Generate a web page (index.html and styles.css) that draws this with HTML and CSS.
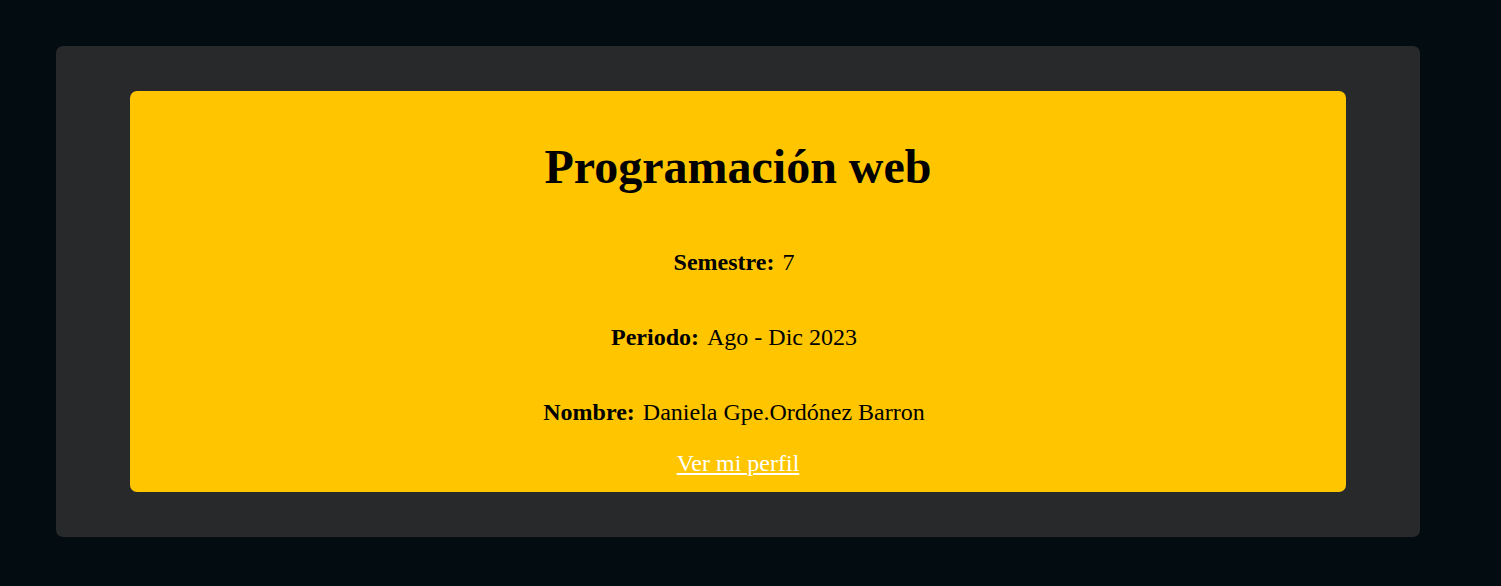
FILE: index.html
```
<!DOCTYPE html>
<html lang="es">
<head>
<meta charset="utf-8">
<title>Programación web</title>
<link rel="stylesheet" href="styles.css">
</head>
<body>
<main class="frame">
  <section class="card">
    <h1 class="title">Programación web</h1>
    <p class="detail"><strong class="label">Semestre:</strong>7</p>
    <p class="detail"><strong class="label">Periodo:</strong>Ago - Dic 2023</p>
    <p class="detail"><strong class="label">Nombre:</strong>Daniela Gpe.Ordónez Barron</p>
    <a class="profile" href="#perfil">Ver mi perfil</a>
  </section>
</main>
</body>
</html>
```
FILE: styles.css
```
* {
  box-sizing: border-box;
}

body {
  margin: 0;
  padding: 46px 81px 49px 56px;
  background: #020c11;
  color: #000;
  font-family: "Liberation Serif", "Times New Roman", serif;
  font-size: 24px;
  line-height: 27px;
}

.frame {
  padding: 45px 74px;
  border-radius: 7px;
  background: #28292a;
}

.card {
  display: flex;
  flex-direction: column;
  align-items: center;
  padding: 48px 24px 15px;
  border-radius: 7px;
  background: #ffc600;
  text-align: center;
}

.title {
  margin: 0 0 54px;
  font-size: 48px;
  line-height: 56px;
}

.detail {
  margin: 0 0 48px;
  padding-right: 8px;
}

.detail:last-of-type {
  margin-bottom: 24px;
}

.label {
  margin-right: 8px;
}

.profile {
  color: #fff;
  text-decoration-thickness: 2px;
  text-underline-offset: 2px;
}
```
